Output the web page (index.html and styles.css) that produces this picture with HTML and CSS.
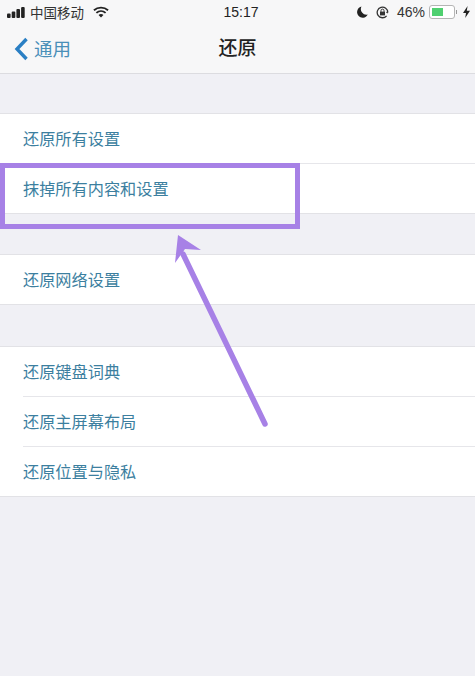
FILE: index.html
```html
<!DOCTYPE html>
<html lang="zh">
<head>
<meta charset="utf-8">
<title>还原</title>
<link rel="stylesheet" href="styles.css">
</head>
<body>
<div class="screen">
  <header class="top">
    <div class="status">
      <div class="status-left">
        <svg class="signal" width="18" height="11" viewBox="0 0 18 11"><rect x="0" y="6.500" width="3.600" height="4.500" rx="1"/><rect x="4.700" y="4.500" width="3.600" height="6.500" rx="1"/><rect x="9.400" y="2" width="3.600" height="9" rx="1"/><rect x="14.100" y="0" width="3.600" height="11" rx="1"/></svg>
        <span class="carrier">中国移动</span>
        <svg class="wifi" width="16" height="12" viewBox="0 0 17 12"><path d="M1 4.200C5.300 .4 11.700 .4 16 4.200M3.600 6.900C6.400 4.500 10.600 4.500 13.400 6.900" fill="none" stroke="#222" stroke-width="2"/><path d="M5.900 9.100C7.400 7.900 9.600 7.900 11.100 9.100L8.500 11.800Z" fill="#222"/></svg>
      </div>
      <span class="clock">15:17</span>
      <div class="status-right">
        <svg width="11" height="12" viewBox="0 0 11 12"><path d="M4.500 .6A5.600 5.600 0 1 0 10.700 8.600 5.600 5.600 0 0 1 4.500 .6Z" fill="#222"/></svg>
        <svg class="lock" width="13" height="13" viewBox="0 0 13 13"><path d="M10.600 9.800A5.300 5.300 0 1 1 11.800 6.500" fill="none" stroke="#333" stroke-width="1.300"/><path d="M11.800 4.800V7.600L10 6.400Z" fill="#333"/><rect x="4" y="5.600" width="5" height="3.800" fill="#333"/><path d="M5 5.800V4.600a1.500 1.500 0 0 1 3 0V5.800" fill="none" stroke="#333"/></svg>
        <span class="pct">46%</span>
        <div class="battery"><div class="battery-fill"></div></div>
        <div class="battery-cap"></div>
        <svg class="bolt" width="7" height="12" viewBox="0 0 7 12"><path d="M4.600 0 0 7H3L2.200 12 7 4.800H3.800Z" fill="#222"/></svg>
      </div>
    </div>
    <nav class="nav">
      <div class="back">
        <svg width="15" height="24" viewBox="0 0 15 24"><path d="M12.500 2 3 12l9.500 10" fill="none" stroke="#2a7fc4" stroke-width="3.400"/></svg>
        <span class="back-label">通用</span>
      </div>
      <h1 class="title">还原</h1>
    </nav>
  </header>

  <section class="group first">
    <div class="row">还原所有设置</div>
    <div class="row">抹掉所有内容和设置</div>
  </section>
  <section class="group">
    <div class="row">还原网络设置</div>
  </section>
  <section class="group last">
    <div class="row">还原键盘词典</div>
    <div class="row">还原主屏幕布局</div>
    <div class="row">还原位置与隐私</div>
  </section>

  <div class="highlight"></div>
  <svg class="arrow" width="120" height="210" viewBox="0 0 120 210">
    <path d="M105 198 23 28" fill="none" stroke="#a781e6" stroke-width="5.500" stroke-linecap="round"/>
    <path d="M18 9 41 24 25 23 15 37Z" fill="#a781e6"/>
  </svg>
</div>
</body>
</html>
```
FILE: styles.css
```css
* { box-sizing: border-box; }
html, body { margin: 0; padding: 0; }
body {
  font-family: "Liberation Sans", "Noto Sans CJK SC", sans-serif;
  background: #f0f0f5;
}
.screen {
  position: relative;
  width: 475px;
  height: 676px;
  overflow: hidden;
  background: #f0f0f5;
}
.top {
  height: 74px;
  background: #f7f7f8;
  border-bottom: 1px solid #dcdce0;
}
.status {
  height: 24px;
  padding: 0 5px 0 7px;
  display: grid;
  grid-template-columns: 1fr auto 1fr;
  align-items: center;
  color: #222;
}
.status-left, .status-right { display: flex; align-items: center; }
.status-right { justify-content: flex-end; }
.signal { fill: #222; margin-right: 5px; }
.carrier { font-size: 13.500px; color: #333; margin-right: 9px; }
.clock { font-size: 14px; color: #222; font-weight: 500; margin-left: 5px; }
.lock { margin-left: 8px; }
.pct { font-size: 14px; color: #333; margin-left: 8px; }
.battery {
  width: 26px;
  height: 14px;
  margin-left: 4px;
  padding: 2px;
  border: 1px solid #b5b5b5;
  border-radius: 3px;
  background: #fff;
}
.battery-fill { width: 11px; height: 100%; background: #4fd070; }
.battery-cap { width: 1px; height: 4px; margin-left: 1px; background: #999; }
.bolt { margin-left: 6px; margin-right: 0; }
.nav {
  position: relative;
  height: 49px;
  padding-bottom: 4px;
  display: flex;
  align-items: center;
  justify-content: center;
}
.back {
  position: absolute;
  left: 14px;
  top: 12px;
  display: flex;
  align-items: center;
  gap: 5px;
}
.back-label { font-size: 18.500px; color: #4a8fb8; position: relative; top: -1px; }
.title { margin: 0; font-size: 19px; font-weight: 500; color: #222; }
.group {
  margin-top: 40px;
  padding-left: 23px;
  background: #fff;
  border-top: 1px solid #e2e2e6;
  border-bottom: 1px solid #e2e2e6;
}
.group.first { margin-top: 39px; }
.group.last { margin-top: 41px; }
.row {
  height: 50px;
  line-height: 50px;
  font-size: 16.200px;
  color: #3c7f9f;
  border-top: 1px solid #e6e6ea;
}
.row:first-child { height: 49px; line-height: 51px; border-top: 0; }
.highlight {
  position: absolute;
  left: 0;
  top: 163px;
  width: 300px;
  height: 66px;
  border: 5px solid #a781e6;
}
.arrow {
  position: absolute;
  left: 160px;
  top: 226px;
}
```
